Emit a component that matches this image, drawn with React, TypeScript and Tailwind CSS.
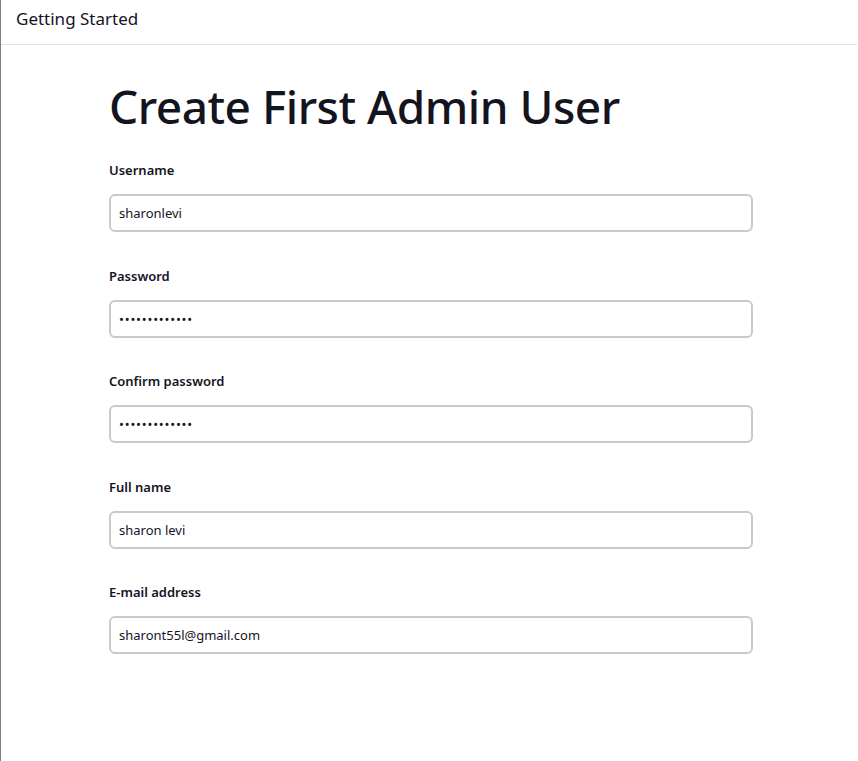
import React from "react";

const fields = [
  { label: "Username", value: "sharonlevi", type: "text" },
  { label: "Password", value: "sharonlevi123", type: "password" },
  { label: "Confirm password", value: "sharonlevi123", type: "password" },
  { label: "Full name", value: "sharon levi", type: "text" },
  { label: "E-mail address", value: "sharont55l@gmail.com", type: "text" },
];

export default function App() {
  return (
    <div
      className="min-h-[761px] bg-white border-l border-[#808080] text-[#14141f]"
      style={{ fontFamily: '"Noto Sans", "Open Sans", sans-serif' }}
    >
      <div className="h-[45px] border-b border-[#e2e2e2] mr-[1px] flex items-center pl-[15px] pb-[8px]">
        <span className="text-[17px] leading-none">Getting Started</span>
      </div>
      <div className="ml-[108px] w-[644px] pt-[32px]">
        <h1 className="text-[46px] leading-[58px] font-medium tracking-[-0.5px]">
          Create First Admin User
        </h1>
        <div className="mt-[25px] flex flex-col">
          {fields.map((f) => (
            <div key={f.label} className="flex flex-col h-[105.5px]">
              <label className="block text-[13px] font-semibold leading-[20px] mb-[14px]">
                {f.label}
              </label>
              <input
                readOnly
                type={f.type}
                value={f.value}
                className={
                  "h-[38px] w-full border-2 border-[#c3cbd0] rounded-[6px] px-[8px] text-[13px] text-[#14141f] outline-none bg-white " +
                  (f.type === "password" ? "tracking-[0.8px]" : "")
                }
                style={{ fontFamily: '"Noto Sans", "Open Sans", sans-serif' }}
              />
            </div>
          ))}
        </div>
      </div>
    </div>
  );
}
